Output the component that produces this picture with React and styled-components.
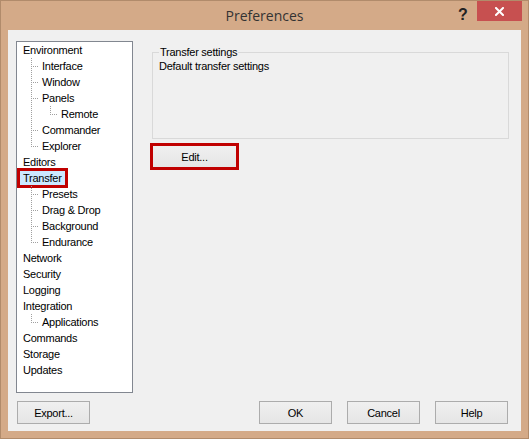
import React from "react";
import styled, { createGlobalStyle } from "styled-components";

const GlobalStyle = createGlobalStyle`
  html, body { margin: 0; padding: 0; background: #ffffff; }
  * { box-sizing: border-box; }
`;

const uiFont = `"Liberation Sans", Arial, sans-serif`;

const Window = styled.div`
  width: 529px;
  height: 439px;
  border: 1px solid #b18b6b;
  background: #d4aa88;
  display: flex;
  flex-direction: column;
  font-family: ${uiFont};
  font-size: 11px;
  letter-spacing: -0.25px;
  color: #000;
`;

const TitleBar = styled.div`
  height: 29px;
  display: grid;
  grid-template-columns: 1fr auto 1fr;
  align-items: start;
`;

const TitleText = styled.div`
  grid-column: 2;
  font-family: "Open Sans", "Noto Sans", sans-serif;
  font-size: 14px;
  letter-spacing: 0;
  color: #333333;
  line-height: 29px;
`;

const TitleButtons = styled.div`
  grid-column: 3;
  justify-self: end;
  display: flex;
  align-items: flex-start;
  margin-right: 6px;
`;

const HelpGlyph = styled.div`
  width: 28px;
  height: 28px;
  display: flex;
  align-items: center;
  justify-content: center;
  font-family: "Liberation Sans", Arial, sans-serif;
  font-weight: bold;
  font-size: 16px;
  letter-spacing: 0;
  color: #222;
  padding-bottom: 1px;
`;

const CloseButton = styled.div`
  width: 45px;
  height: 20px;
  background: #c75050;
  display: flex;
  align-items: center;
  justify-content: center;
`;

const Client = styled.div`
  flex: 1;
  margin: 0 7px 7px 7px;
  background: #f0f0f0;
  padding: 11px 13px 7px 8px;
  display: flex;
  flex-direction: column;
`;

const Body = styled.div`
  display: flex;
  gap: 19px;
`;

const Tree = styled.div`
  width: 117px;
  height: 352px;
  flex: none;
  border: 1px solid #828790;
  background: #ffffff;
  overflow: hidden;
`;

const TreeRow = styled.div`
  height: 16px;
  display: flex;
  align-items: center;
  padding-left: 3px;
`;

const GuideSvg = styled.svg`
  width: 19px;
  height: 16px;
  flex: none;
  display: block;
`;

const TreeLabel = styled.span`
  padding: 0 3px;
  height: 14px;
  line-height: 14px;
  white-space: nowrap;
  background: ${(p) => (p.$selected ? "#cce8ff" : "transparent")};
  outline: ${(p) => (p.$selected ? "3px solid #c00000" : "none")};
`;

const RightPanel = styled.div`
  flex: 1;
  padding-top: 5px;
  display: flex;
  flex-direction: column;
  align-items: flex-start;
`;

const GroupBox = styled.fieldset`
  width: 357px;
  height: 93px;
  margin: 0;
  border: 1px solid #d9d9d9;
  padding: 1px 6px 0 6px;
  min-width: 0;
`;

const GroupLegend = styled.legend`
  padding: 0 1px;
  margin: 0;
  line-height: 13px;
  font-size: 11px;
`;

const GroupText = styled.div`
  line-height: 13px;
`;

const Button = styled.button`
  width: ${(p) => p.$width || 73}px;
  height: ${(p) => p.$height || 23}px;
  border: ${(p) => (p.$highlight ? "3px solid #c00000" : "1px solid #acacac")};
  background: linear-gradient(#f0f0f0, #e5e5e5);
  font-family: ${uiFont};
  font-size: 11px;
  letter-spacing: -0.25px;
  color: #000;
  padding: 0;
  margin: 0;
  display: flex;
  align-items: center;
  justify-content: center;
`;

const EditButton = styled(Button)`
  margin-top: 4px;
  margin-left: -2px;
`;

const Footer = styled.div`
  margin-top: 8px;
  display: flex;
  align-items: center;
  gap: 15px;
`;

const ExportSlot = styled.div`
  margin-left: 1px;
  margin-right: auto;
`;

const Guide = ({ type }) => (
  <GuideSvg viewBox="0 0 19 16" shapeRendering="crispEdges">
    {type !== "blank" && (
      <line
        x1="11.5"
        y1="0"
        x2="11.5"
        y2={type === "end" ? 9 : 16}
        stroke="#a0a0a0"
        strokeWidth="1"
        strokeDasharray="1 1"
      />
    )}
    {(type === "tee" || type === "end") && (
      <line
        x1="13"
        y1="8.5"
        x2="19"
        y2="8.5"
        stroke="#a0a0a0"
        strokeWidth="1"
        strokeDasharray="1 1"
      />
    )}
  </GuideSvg>
);

const items = [
  { label: "Environment", guides: [] },
  { label: "Interface", guides: ["tee"] },
  { label: "Window", guides: ["tee"] },
  { label: "Panels", guides: ["tee"] },
  { label: "Remote", guides: ["line", "end"] },
  { label: "Commander", guides: ["tee"] },
  { label: "Explorer", guides: ["end"] },
  { label: "Editors", guides: [] },
  { label: "Transfer", guides: [], selected: true },
  { label: "Presets", guides: ["tee"] },
  { label: "Drag & Drop", guides: ["tee"] },
  { label: "Background", guides: ["tee"] },
  { label: "Endurance", guides: ["end"] },
  { label: "Network", guides: [] },
  { label: "Security", guides: [] },
  { label: "Logging", guides: [] },
  { label: "Integration", guides: [] },
  { label: "Applications", guides: ["end"] },
  { label: "Commands", guides: [] },
  { label: "Storage", guides: [] },
  { label: "Updates", guides: [] },
];

export default function App() {
  return (
    <>
      <GlobalStyle />
      <Window>
        <TitleBar>
          <TitleText>Preferences</TitleText>
          <TitleButtons>
            <HelpGlyph>?</HelpGlyph>
            <CloseButton>
              <svg width="9" height="9" viewBox="0 0 9 9">
                <path d="M1 1 L8 8 M8 1 L1 8" stroke="#ffffff" strokeWidth="2" strokeLinecap="square" />
              </svg>
            </CloseButton>
          </TitleButtons>
        </TitleBar>
        <Client>
          <Body>
            <Tree>
              {items.map((it) => (
                <TreeRow key={it.label}>
                  {it.guides.map((g, i) => (
                    <Guide key={i} type={g} />
                  ))}
                  <TreeLabel $selected={it.selected}>{it.label}</TreeLabel>
                </TreeRow>
              ))}
            </Tree>
            <RightPanel>
              <GroupBox>
                <GroupLegend>Transfer settings</GroupLegend>
                <GroupText>Default transfer settings</GroupText>
              </GroupBox>
              <EditButton $width={89} $height={27} $highlight>
                Edit...
              </EditButton>
            </RightPanel>
          </Body>
          <Footer>
            <ExportSlot>
              <Button>Export...</Button>
            </ExportSlot>
            <Button>OK</Button>
            <Button>Cancel</Button>
            <Button>Help</Button>
          </Footer>
        </Client>
      </Window>
    </>
  );
}
